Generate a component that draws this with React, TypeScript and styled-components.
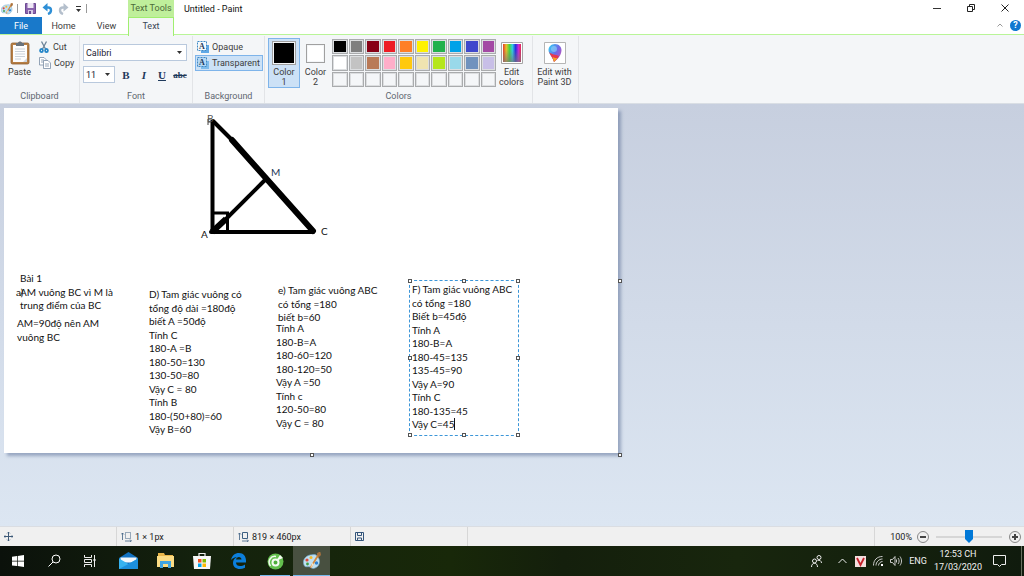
import React from 'react';
import styled, { createGlobalStyle, css } from 'styled-components';

const GlobalStyle = createGlobalStyle`
  * { box-sizing: border-box; }
  body { margin: 0; background: #fff; }
  button, select, input { font: inherit; color: inherit; margin: 0; }
  button { padding: 0; border: 0; background: none; }
  svg { display: block; flex: none; }
`;

const AppWindow = styled.div`
  display: flex;
  flex-direction: column;
  min-height: 100vh;
  font-family: Roboto, 'Noto Sans', sans-serif;
  font-size: 9px;
  line-height: 12px;
  color: #3c3c3c;
`;

/* ---------- title bar ---------- */
const Header = styled.header`
  display: flex;
  height: 36px;
  background: linear-gradient(#fff 34px, #b9f598 34px, #b9f598 35px, #f4f6f8 35px);
`;
const HeaderLeft = styled.div`
  width: 128px;
`;
const QuickAccess = styled.div`
  display: flex;
  align-items: center;
  height: 17px;
`;
const QuickButton = styled.button<{ $w: number }>`
  width: ${(p) => p.$w}px;
  display: flex;
  justify-content: center;
`;
const Bar = styled.span`
  width: 1px;
  height: 9px;
  background: #999;
`;
const Tabs = styled.nav`
  display: flex;
  height: 17px;
`;
const Tab = styled.button<{ $file?: boolean }>`
  width: 43px;
  ${(p) => p.$file && css`
    width: 42px;
    color: #fff;
    background: #1979ca;
  `}
`;
const ContextTab = styled.div`
  width: 46px;
  text-align: center;
`;
const ContextTitle = styled.div`
  height: 17px;
  line-height: 16px;
  color: #4c6a3a;
  background: #bfef9b;
  white-space: nowrap;
`;
const ActiveTab = styled.button`
  display: block;
  width: 100%;
  height: 19px;
  padding-bottom: 2px;
  color: #3b4658;
  border: 1px solid #a0ef70;
  border-width: 1px 1px 0;
  background: #f5f6f7;
`;
const Title = styled.h1`
  margin: 3px 0 0 10px;
  font-size: 9px;
  line-height: 12px;
  font-weight: 400;
  color: #111;
`;
const Controls = styled.div`
  margin-left: auto;
`;
const WindowButtons = styled.div`
  display: flex;
  height: 16px;
  padding-right: 2px;
`;
const WindowButton = styled.button`
  width: 34px;
  display: grid;
  place-items: center;
`;
const HelpRow = styled.div`
  display: flex;
  justify-content: flex-end;
  align-items: center;
  gap: 7px;
  height: 18px;
  padding-right: 3px;
`;
const HelpButton = styled.button`
  width: 11px;
  height: 11px;
  border-radius: 50%;
  line-height: 11px;
  font-weight: 700;
  color: #fff;
  background: #0f78d0;
`;

/* ---------- ribbon ---------- */
const Ribbon = styled.section`
  display: flex;
  height: 68px;
  background: #f4f6f8;
  border-bottom: 1px solid #d9dee4;
`;
const Group = styled.div<{ $w: number }>`
  display: flex;
  flex-direction: column;
  justify-content: space-between;
  width: ${(p) => p.$w}px;
  height: 67px;
  border-right: 1px solid #e2e4e7;
`;
const GroupBody = styled.div<{ $pad?: number }>`
  display: flex;
  padding: 2px 0 0 ${(p) => p.$pad ?? 0}px;
`;
const GroupLabel = styled.div`
  height: 13px;
  text-align: center;
  color: #5e6670;
`;
const LargeButton = styled.button<{ $w: number; $selected?: boolean }>`
  display: flex;
  flex-direction: column;
  align-items: center;
  width: ${(p) => p.$w}px;
  height: 50px;
  padding-top: 1px;
  line-height: 10px;
  border: 1px solid transparent;
  ${(p) => p.$selected && css`
    border-color: #7eb4ea;
    background: #cce1f6;
  `}
`;
const LargeIcon = styled.span`
  display: grid;
  place-items: center;
  height: 26px;
`;
const LargeText = styled.span`
  padding-top: 1px;
  white-space: nowrap;
`;
const Column = styled.div<{ $gap: number; $top: number }>`
  display: flex;
  flex-direction: column;
  align-items: flex-start;
  gap: ${(p) => p.$gap}px;
  padding-top: ${(p) => p.$top}px;
`;
const SmallButton = styled.button<{ $selected?: boolean }>`
  display: flex;
  align-items: center;
  gap: 3px;
  height: 16px;
  padding: 0 2px 0 1px;
  white-space: nowrap;
  border: 1px solid transparent;
  ${(p) => p.$selected && css`
    border-color: #7eb4ea;
    background: #cce1f6;
  `}
`;
const PickerBox = styled.label<{ $w: number }>`
  display: grid;
  grid-template-columns: 1fr 9px;
  align-items: center;
  width: ${(p) => p.$w}px;
  height: 17px;
  color: #223;
  background: #fff;
  border: 1px solid #b9c9dd;
`;
const Picker = styled.select`
  appearance: none;
  width: 100%;
  padding: 0 2px;
  border: 0;
  background: none;
`;
const FormatRow = styled.div`
  display: flex;
  align-items: center;
  gap: 4px;
`;
const FormatButton = styled.button<{ $kind: 'b' | 'i' | 'u' | 's' }>`
  width: 14px;
  height: 16px;
  font-family: 'Liberation Serif', serif;
  font-weight: 700;
  font-size: 11px;
  color: #1e395b;
  ${(p) => p.$kind === 'i' && css`font-style: italic;`}
  ${(p) => p.$kind === 'u' && css`text-decoration: underline;`}
  ${(p) => p.$kind === 's' && css`
    font-size: 9px;
    text-decoration: line-through;
  `}
`;
const ColorChip = styled.span<{ $size: number; $color: string }>`
  width: ${(p) => p.$size}px;
  height: ${(p) => p.$size}px;
  border: 1px solid #a0a0a0;
  box-shadow: inset 0 0 0 1px #f4f6f8;
  background: ${(p) => p.$color};
`;
const Palette = styled.div`
  display: grid;
  grid-template-columns: repeat(10, 1fr);
  grid-template-rows: repeat(3, 1fr);
  gap: 1px;
  width: 164px;
  height: 48px;
  margin: 1px 1px 0;
`;
const Swatch = styled.button<{ $color: string }>`
  border: 1px solid #a9abad;
  box-shadow: inset 0 0 0 1px #dcdee0;
  background: ${(p) => p.$color};
`;

/* ---------- work area ---------- */
const WorkArea = styled.main`
  flex: 1;
  padding: 4px;
  background: linear-gradient(#c7cfdf, #dce6f2);
`;
const Sheet = styled.div`
  position: relative;
  width: 614px;
  height: 345px;
  background: #fff;
  box-shadow: 3px 3px 3px rgba(90, 110, 150, 0.5);
  font-family: Lato, 'Noto Sans', sans-serif;
  font-size: 10px;
  line-height: 13px;
  color: #111;
`;
const Drawing = styled.svg`
  position: absolute;
  inset: 0;
`;
const Note = styled.div<{ $x: number; $y: number; $h?: number; $color?: string }>`
  position: absolute;
  left: ${(p) => p.$x}px;
  top: ${(p) => p.$y}px;
  height: ${(p) => p.$h ?? 13}px;
  display: flex;
  flex-direction: column;
  justify-content: space-between;
  white-space: nowrap;
  color: ${(p) => p.$color ?? 'inherit'};
`;
const Selection = styled.div`
  position: absolute;
  left: 405px;
  top: 172px;
  width: 110px;
  height: 156px;
  border: 1px dashed #3c96d8;
`;
const Handle = styled.span<{ $x: string; $y: string }>`
  position: absolute;
  left: ${(p) => p.$x};
  top: ${(p) => p.$y};
  width: 4px;
  height: 4px;
  margin: -2px;
  border: 1px solid #555;
  background: #fff;
`;
const Caret = styled.span`
  display: inline-block;
  width: 1px;
  height: 12px;
  vertical-align: -2px;
  background: #111;
`;

/* ---------- status bar ---------- */
const StatusBar = styled.footer`
  display: flex;
  height: 20px;
  color: #222;
  background: #f0f0f0;
  border-top: 1px solid #dadde2;
`;
const StatusCell = styled.div`
  display: flex;
  align-items: center;
  gap: 3px;
  width: 117px;
  padding-left: 4px;
  border-right: 1px solid #d7d7d7;
`;
const Zoom = styled.div`
  display: flex;
  align-items: center;
  gap: 5px;
  margin-left: auto;
  padding: 0 3px 0 15px;
  border-left: 1px solid #d7d7d7;
`;
const RoundButton = styled.button`
  width: 12px;
  height: 12px;
  display: grid;
  place-items: center;
  border: 1px solid #888;
  border-radius: 50%;
`;
const Slider = styled.input`
  appearance: none;
  width: 66px;
  height: 14px;
  margin: 0 2px;
  background: linear-gradient(#d6d6d6, #d6d6d6) center / 100% 2px no-repeat;
  &::-webkit-slider-thumb {
    appearance: none;
    width: 8px;
    height: 13px;
    background: #0078d7;
    clip-path: polygon(0 0, 100% 0, 100% 70%, 50% 100%, 0 70%);
  }
`;

/* ---------- taskbar ---------- */
const Taskbar = styled.nav`
  display: flex;
  height: 30px;
  color: #f2f2f2;
  background: linear-gradient(90deg, #0b110b, #14220d 20%, #182809 44%, #141f0c 55%, #18260d 72%, #101b0d);
`;
const TaskButton = styled.button<{ $running?: boolean; $active?: boolean }>`
  display: grid;
  place-items: center;
  width: 36px;
  height: 30px;
  border-bottom: 1px solid transparent;
  ${(p) => p.$running && css`
    border-bottom: 0;
    background: linear-gradient(#76b9ed, #76b9ed) bottom / 30px 1px no-repeat;
  `}
  ${(p) => p.$active && css`
    background: #485040;
    border-bottom-color: #76b9ed;
  `}
`;
const Pinned = styled.div`
  display: flex;
  width: 220px;
  margin-left: 2px;
  & > button { flex: 1; }
`;
const Tray = styled.div`
  display: flex;
  align-items: center;
  margin-left: auto;
`;
const TrayButton = styled.button<{ $w: number }>`
  display: grid;
  place-items: center;
  width: ${(p) => p.$w}px;
  height: 30px;
`;
const Clock = styled(TrayButton)`
  align-content: center;
  line-height: 13px;
  white-space: nowrap;
`;
const ShowDesktop = styled.button`
  width: 3px;
  height: 30px;
  border-left: 1px solid #687060;
`;

/* ---------- icons ---------- */
const PaintIcon = ({ size }: { size: number }) => (
  <svg width={size} height={size} viewBox="0 0 18 18">
    <path d="M7 3C2 4-1 9 1 13c1 3 4 1 6 2 2 2 5 2 8-1 3-4 1-9-2-11-2-1-4 0-6 0z" fill="#bfe0f2" stroke="#6fa6c9" strokeWidth=".7" />
    <circle cx="4" cy="8" r="1.6" fill="#e04a3c" />
    <circle cx="8" cy="5.500" r="1.500" fill="#f3ba2c" />
    <circle cx="4.500" cy="12" r="1.400" fill="#3f9b48" />
    <circle cx="13.500" cy="11" r="1.700" fill="#2d7fd0" />
    <path d="M16.500 1 8 15" stroke="#d38a3d" strokeWidth="1.800" strokeLinecap="round" />
    <path d="m14 1 3-1 1 3-3 3z" fill="#a9723f" />
    <path d="m9 11 2 1-3 4z" fill="#f0e6d0" />
  </svg>
);
const Save = () => (
  <svg width="11" height="11" viewBox="0 0 11 11">
    <path d="M.5.5h10v10h-10z" fill="#8a63ad" stroke="#6c4a93" />
    <path d="M2.500 0h6v5h-6z" fill="#eee8f5" /><path d="M3 7h5v4H3z" fill="#d6cbe4" /><path d="M4 8h2v3H4z" fill="#6c4a93" />
  </svg>
);
const Undo = ({ flip }: { flip?: boolean }) => (
  <svg width="11" height="12" viewBox="0 0 11 12">
    <g transform={flip ? 'translate(11 0) scale(-1 1)' : undefined}>
      <path d="M3 4.500h3c4 0 4 5 0 6.500" fill="none" stroke={flip ? '#b4bfcc' : '#2e8fd6'} strokeWidth="2.400" />
      <path d="M5.500 0v8.500L.5 4.500z" fill={flip ? '#b4bfcc' : '#2e8fd6'} />
    </g>
  </svg>
);
const Caretdown = ({ c = '#333' }: { c?: string }) => (
  <svg width="5" height="3" viewBox="0 0 5 3"><path d="M0 0h5L2.500 3z" fill={c} /></svg>
);
const Clipboard = () => (
  <svg width="20" height="24" viewBox="0 0 20 24">
    <rect x="1" y="2" width="18" height="21" rx="1.500" fill="#b77f45" stroke="#8f5f30" strokeWidth=".8" />
    <path d="M3 4h14v17H3z" fill="#fdfdfd" />
    <path d="M5 8h10M5 10.500h10M5 13h10M5 15.500h10M5 18h6" stroke="#c4ccd5" strokeWidth=".9" />
    <path d="M6 2h2c0-2 4-2 4 0h2v3H6z" fill="#69737d" /><path d="m17 17v4h-4z" fill="#cfd7df" />
  </svg>
);
const Scissors = () => (
  <svg width="11" height="12" viewBox="0 0 11 12" fill="none">
    <path d="m2.500 .5 4 7.500M7.500 .5 3.500 8" stroke="#6d8599" strokeWidth="1.300" />
    <ellipse cx="2.500" cy="9.500" rx="1.400" ry="1.600" stroke="#2184c7" strokeWidth="1.800" /><ellipse cx="7.500" cy="9.500" rx="1.400" ry="1.600" stroke="#2184c7" strokeWidth="1.800" />
  </svg>
);
const CopyIcon = () => (
  <svg width="12" height="12" viewBox="0 0 12 12" stroke="#7a8ea5" strokeWidth=".8">
    <path d="M.5.5h4.500l2 2V8H.5z" fill="#fff" /><path d="M2 3h3M2 5h3" />
    <path d="M4.500 3.500h4.500l2.500 2.500v5.500h-7z" fill="#fff" /><path d="M6 7h4M6 9h4" />
  </svg>
);
const LetterBox = ({ filled }: { filled?: boolean }) => (
  <svg width="12" height="12" viewBox="0 0 12 12">
    <path d="M4 4h8v8H4z" fill={filled ? '#7ebcec' : '#5fa8e6'} />
    <path d="M.5.5h9v9h-9z" fill={filled ? '#b4d7f4' : '#f4f9fd'} stroke="#3f89c4" strokeDasharray="2 1" />
    <text x="2" y="8" fontSize="8" fontFamily="Liberation Serif, serif" fontWeight="700" fill="#1e395b">A</text>
  </svg>
);
const Rainbow = () => (
  <svg width="22" height="22" viewBox="0 0 22 22">
    <defs>
      <linearGradient id="hue"><stop offset="0" stopColor="#e63a2e" /><stop offset=".18" stopColor="#e8c02a" /><stop offset=".36" stopColor="#46d640" /><stop offset=".52" stopColor="#32cfe0" /><stop offset=".7" stopColor="#2430e0" /><stop offset=".86" stopColor="#c728d8" /><stop offset="1" stopColor="#e62a4a" /></linearGradient>
      <linearGradient id="fade" x2="0" y2="1"><stop offset=".3" stopColor="#777" stopOpacity="0" /><stop offset="1" stopColor="#777" stopOpacity=".7" /></linearGradient>
    </defs>
    <path d="M.5.5h21v21H.5z" fill="#fff" stroke="#a5a5a5" /><path d="M2 2h18v18H2z" fill="url(#hue)" /><path d="M2 2h18v18H2z" fill="url(#fade)" />
  </svg>
);
const Paint3D = () => (
  <svg width="22" height="22" viewBox="0 0 22 22">
    <defs><linearGradient id="drop" x1="0" y1=".2" x2="1" y2=".9"><stop offset="0" stopColor="#39c5f3" /><stop offset=".5" stopColor="#6a6be8" /><stop offset="1" stopColor="#d54bb0" /></linearGradient></defs>
    <path d="M.5.5h21v21H.5z" fill="#fff" stroke="#b5b5b5" />
    <path d="M11 2c-4 0-6.500 3-6.500 6 0 4 4 6 5.500 12 4-3 7.500-7 7.500-12 0-3-2.500-6-6.500-6z" fill="url(#drop)" />
    <path d="M5 10c3 3 6 2 10 4-1 2-3 4-5 6-1-4-4-7-5-10z" fill="#e8394d" /><path d="M8.500 15c2 1 3 1 5 1l-3.500 4z" fill="#f5a623" />
    <circle cx="10" cy="7" r="3" fill="#8fd4fa" opacity=".6" />
  </svg>
);
const SizeIcon = ({ dashed }: { dashed?: boolean }) => (
  <svg width="11" height="10" viewBox="0 0 11 10" fill="none" stroke="#3e6083">
    <path d="M1.500 1v7M0 2.500 1.500 1 3 2.500" strokeWidth=".8" /><path d="M4.500.5h5v6h-5z" strokeDasharray={dashed ? '1 1' : undefined} />
    <path d="M4 9h6M9 7.500 10.500 9 9 10" strokeWidth=".8" />
  </svg>
);

/* ---------- data ---------- */
const palette = [
  '#000', '#7f7f7f', '#880015', '#ed1c24', '#ff7f27', '#fff200', '#22b14c', '#00a2e8', '#3f48cc', '#a349a4',
  '#fff', '#c3c3c3', '#b97a57', '#ffaec9', '#ffc90e', '#efe4b0', '#b5e61d', '#99d9ea', '#7092be', '#c8bfe7',
  ...Array(10).fill('#f4f6f8'),
];
type Block = { x: number; y: number; h?: number; color?: string; lines: string[] };
const notes: Block[] = [
  { x: 203, y: 4, color: '#555', lines: ['B'] },
  { x: 267, y: 58, color: '#1e3556', lines: ['M'] },
  { x: 197, y: 120, lines: ['A'] },
  { x: 317, y: 117, lines: ['C'] },
  { x: 16, y: 164, lines: ['Bài 1'] },
  { x: 12, y: 178, lines: ['a)'] },
  { x: 16, y: 178, h: 26, lines: ['AM vuông BC vì M là', 'trung điểm của BC'] },
  { x: 13, y: 209, h: 27, lines: ['AM=90độ nên AM', 'vuông BC'] },
  { x: 145, y: 180, h: 148, lines: ['D) Tam giác vuông có', 'tổng độ dài =180độ', 'biết A =50độ', 'Tính C', '180-A =B', '180-50=130', '130-50=80', 'Vậy C = 80', 'Tính B', '180-(50+80)=60', 'Vậy B=60'] },
  { x: 274, y: 176, h: 40, lines: ['e) Tam giác vuông ABC', 'có tổng =180', 'biết b=60'] },
  { x: 272, y: 214, h: 108, lines: ['Tính A', '180-B=A', '180-60=120', '180-120=50', 'Vậy A =50', 'Tính c', '120-50=80', 'Vậy C = 80'] },
];
const activeNote = ['F) Tam giác vuông ABC', 'có tổng =180', 'Biết b=45độ', 'Tính A', '180-B=A', '180-45=135', '135-45=90', 'Vậy A=90', 'Tính C', '180-135=45'];

export default function App() {
  return (
    <AppWindow>
      <GlobalStyle />
      <Header>
        <HeaderLeft>
          <QuickAccess>
            <QuickButton $w={13} aria-label="Paint menu"><PaintIcon size={12} /></QuickButton>
            <QuickButton $w={8} as="span"><Bar /></QuickButton>
            <QuickButton $w={19} aria-label="Save"><Save /></QuickButton>
            <QuickButton $w={15} aria-label="Undo"><Undo /></QuickButton>
            <QuickButton $w={16} aria-label="Redo"><Undo flip /></QuickButton>
            <QuickButton $w={15} aria-label="Customize">
              <svg width="5" height="6" viewBox="0 0 5 6"><path d="M0 0h5v1H0zM0 3h5L2.500 6z" fill="#333" /></svg>
            </QuickButton>
            <Bar />
          </QuickAccess>
          <Tabs>
            <Tab $file>File</Tab>
            <Tab>Home</Tab>
            <Tab>View</Tab>
          </Tabs>
        </HeaderLeft>
        <ContextTab>
          <ContextTitle>Text Tools</ContextTitle>
          <ActiveTab>Text</ActiveTab>
        </ContextTab>
        <Title>Untitled - Paint</Title>
        <Controls>
          <WindowButtons>
            <WindowButton aria-label="Minimize"><svg width="8" height="8"><path d="M0 4.500h8" stroke="#333" /></svg></WindowButton>
            <WindowButton aria-label="Restore"><svg width="8" height="8" fill="none" stroke="#222"><path d="M.5 2.500h5v5h-5zM2.500 2V.5h5v5H6" /></svg></WindowButton>
            <WindowButton aria-label="Close"><svg width="8" height="8" stroke="#222"><path d="m.5.5 7 7M7.500.5l-7 7" /></svg></WindowButton>
          </WindowButtons>
          <HelpRow>
            <button aria-label="Collapse ribbon"><svg width="6" height="4" fill="none" stroke="#999"><path d="M.5 3.500 3 1l2.500 2.500" /></svg></button>
            <HelpButton aria-label="Help">?</HelpButton>
          </HelpRow>
        </Controls>
      </Header>

      <Ribbon>
        <Group $w={80}>
          <GroupBody $pad={2}>
            <LargeButton $w={35}><LargeIcon><Clipboard /></LargeIcon><LargeText>Paste</LargeText></LargeButton>
            <Column $gap={0} $top={1}>
              <SmallButton><Scissors />Cut</SmallButton>
              <SmallButton><CopyIcon />Copy</SmallButton>
            </Column>
          </GroupBody>
          <GroupLabel>Clipboard</GroupLabel>
        </Group>
        <Group $w={113}>
          <GroupBody $pad={3}>
            <Column $gap={5} $top={6}>
              <PickerBox $w={104}>
                <Picker aria-label="Font family"><option>Calibri</option></Picker><Caretdown />
              </PickerBox>
              <FormatRow>
                <PickerBox $w={32}>
                  <Picker aria-label="Font size"><option>11</option></Picker><Caretdown />
                </PickerBox>
                <FormatButton $kind="b">B</FormatButton>
                <FormatButton $kind="i">I</FormatButton>
                <FormatButton $kind="u">U</FormatButton>
                <FormatButton $kind="s">abc</FormatButton>
              </FormatRow>
            </Column>
          </GroupBody>
          <GroupLabel>Font</GroupLabel>
        </Group>
        <Group $w={72}>
          <GroupBody $pad={2}>
            <Column $gap={0} $top={1}>
              <SmallButton><LetterBox />Opaque</SmallButton>
              <SmallButton $selected><LetterBox filled />Transparent</SmallButton>
            </Column>
          </GroupBody>
          <GroupLabel>Background</GroupLabel>
        </Group>
        <Group $w={268}>
          <GroupBody $pad={3}>
            <LargeButton $w={32} $selected><LargeIcon><ColorChip $size={24} $color="#000" /></LargeIcon><LargeText>Color<br />1</LargeText></LargeButton>
            <LargeButton $w={31}><LargeIcon><ColorChip $size={19} $color="#fff" /></LargeIcon><LargeText>Color<br />2</LargeText></LargeButton>
            <Palette>
              {palette.map((c, i) => <Swatch key={i} $color={c} aria-label={`Color ${i + 1}`} />)}
            </Palette>
            <LargeButton $w={29}><LargeIcon><Rainbow /></LargeIcon><LargeText>Edit<br />colors</LargeText></LargeButton>
          </GroupBody>
          <GroupLabel>Colors</GroupLabel>
        </Group>
        <Group $w={46}>
          <GroupBody>
            <LargeButton $w={43}><LargeIcon><Paint3D /></LargeIcon><LargeText>Edit with<br />Paint 3D</LargeText></LargeButton>
          </GroupBody>
        </Group>
      </Ribbon>

      <WorkArea>
        <Sheet>
          <Drawing width="614" height="345" viewBox="0 0 614 345" fill="none" stroke="#000">
            <path d="M208.500 12v112" strokeWidth="4" />
            <path d="M207 124h102" strokeWidth="4" strokeLinecap="round" />
            <path d="m209 13 20 20" strokeWidth="4" strokeLinecap="round" />
            <path d="m228 32 81 91" strokeWidth="6" strokeLinecap="round" />
            <path d="m210 123 51-51" strokeWidth="4" strokeLinecap="round" />
            <path d="M210 105h13.500v18" strokeWidth="3" />
            <path d="m208 124 14-13" strokeWidth="6" />
            <path d="M204 17v-6h3M204 14h3" stroke="#444" />
          </Drawing>
          {notes.map((n, i) => (
            <Note key={i} $x={n.x} $y={n.y} $h={n.h} $color={n.color}>
              {n.lines.map((l) => <span key={l}>{l}</span>)}
            </Note>
          ))}
          <Selection>
            {['0%', '50%', '100%'].flatMap((x) => ['0%', '50%', '100%'].map((y) => (
              x === '50%' && y === '50%' ? null : <Handle key={x + y} $x={x} $y={y} />
            )))}
          </Selection>
          <Note $x={408} $y={175} $h={148}>
            {activeNote.map((l) => <span key={l}>{l}</span>)}
            <span>Vậy C=45<Caret /></span>
          </Note>
          <Handle $x="308px" $y="347px" />
          <Handle $x="616px" $y="347px" />
          <Handle $x="616px" $y="173px" />
        </Sheet>
      </WorkArea>

      <StatusBar>
        <StatusCell>
          <svg width="9" height="9" viewBox="0 0 9 9" fill="none" stroke="#3e5a78"><path d="M4.500 0v9M0 4.500h9" /><path d="M3 1.500 4.500 0 6 1.500M3 7.500 4.500 9 6 7.500M1.500 3 0 4.500 1.500 6M7.500 3 9 4.500 7.500 6" strokeWidth=".6" /></svg>
        </StatusCell>
        <StatusCell><SizeIcon dashed />1 × 1px</StatusCell>
        <StatusCell><SizeIcon />819 × 460px</StatusCell>
        <StatusCell>
          <svg width="9" height="9" viewBox="0 0 9 9" fill="none" stroke="#34557b"><path d="M.5.5h8v8h-8zM2.500.5v3h4v-3M2.500 8.500V6h4v2.500" /></svg>
        </StatusCell>
        <Zoom>
          <span>100%</span>
          <RoundButton aria-label="Zoom out"><svg width="6" height="6"><path d="M0 3h6" stroke="#444" strokeWidth="2" /></svg></RoundButton>
          <Slider type="range" aria-label="Zoom" defaultValue={50} />
          <RoundButton aria-label="Zoom in"><svg width="6" height="6"><path d="M0 3h6M3 0v6" stroke="#444" strokeWidth="2" /></svg></RoundButton>
        </Zoom>
      </StatusBar>

      <Taskbar>
        <TaskButton aria-label="Start">
          <svg width="12" height="12" viewBox="0 0 12 12" fill="#fff"><path d="m0 1.700 5-.7v4.700H0zM5.700.9 12 0v5.700H5.700zM0 6.400h5v4.700l-5-.7zM5.700 6.400H12V12l-6.300-.9z" /></svg>
        </TaskButton>
        <TaskButton aria-label="Search">
          <svg width="13" height="13" viewBox="0 0 13 13" fill="none" stroke="#fff"><circle cx="8" cy="5" r="4" /><path d="m5 8-4.500 4.500" /></svg>
        </TaskButton>
        <TaskButton aria-label="Task view">
          <svg width="13" height="12" viewBox="0 0 13 12" fill="none" stroke="#eee"><path d="M.5 0v2.500h7V0M.5 4.500h7v3h-7zM.5 12V9.500h7V12M10.500 0v12" /><path d="M9.500 4h2v2h-2z" fill="#eee" stroke="none" /></svg>
        </TaskButton>
        <Pinned>
          <TaskButton aria-label="Mail">
            <svg width="19" height="17" viewBox="0 0 19 17"><path d="m0 6 9.500-6L19 6v11H0z" fill="#1272c2" /><path d="M1.500 5.500h16v5h-16z" fill="#f3f7fb" /><path d="M0 6.500 9.500 12 19 6.500V17H0z" fill="#36b2ef" /><path d="m0 17 9.500-5L19 6.500V17z" fill="#1c8fdc" /></svg>
          </TaskButton>
          <TaskButton aria-label="File Explorer">
            <svg width="17" height="15" viewBox="0 0 17 15"><path d="M1 0h6l1 2h8v12H1z" fill="#e9b64a" /><path d="M0 3h17v11H0z" fill="#fbdc84" /><path d="M3 8h11v7h-3v-4H6v4H3z" fill="#3fa4e2" /></svg>
          </TaskButton>
          <TaskButton aria-label="Store">
            <svg width="18" height="18" viewBox="0 0 18 18"><path d="M6 5V1.500h6V5" fill="none" stroke="#eee" strokeWidth="1.200" /><path d="M0 4h18l-1 13H1z" fill="#f7f7f7" /><path d="M5 7h3.500v3.500H5z" fill="#f25022" /><path d="M9.500 7H13v3.500H9.500z" fill="#7fba00" /><path d="M5 11.500h3.500V15H5z" fill="#00a4ef" /><path d="M9.500 11.500H13V15H9.500z" fill="#ffb900" /></svg>
          </TaskButton>
          <TaskButton aria-label="Edge">
            <svg width="15" height="16" viewBox="0 0 15 16"><path d="M0 7C1 2.500 4 0 8 0c4.500 0 7 3.500 7 7.500V9.500H5c0 4 5 4.500 9 2v3.300C8 17.500 2 15.500 2 10c0-3 1.500-4.800 4-6C3.500 4.300 1.500 5.300 0 7zm5-.5h5.500C10.500 3 5.500 3 5 6.500z" fill="#0c7fdc" /></svg>
          </TaskButton>
          <TaskButton $running aria-label="Browser">
            <svg width="17" height="17" viewBox="0 0 17 17"><circle cx="8.500" cy="8.500" r="8" fill="#63bf4d" /><path d="M3.500 13C0 8 4 2.500 9 3.500" stroke="#f2faee" strokeWidth="1.500" fill="none" /><circle cx="8.500" cy="9.500" r="3" fill="#4fae3c" stroke="#f5fbf2" strokeWidth="2" /><path d="m9 8 4-6 3 3z" fill="#f5fbf2" /></svg>
          </TaskButton>
          <TaskButton $active aria-label="Paint"><PaintIcon size={18} /></TaskButton>
        </Pinned>
        <Tray>
          <TrayButton $w={34} aria-label="People">
            <svg width="11" height="12" viewBox="0 0 11 12" fill="none" stroke="#eee"><circle cx="8" cy="2.500" r="2" /><path d="M6.500 5.500c2-1 4 .5 4 2.500" /><circle cx="3.500" cy="6" r="2" /><path d="M.5 12c0-5 6-5 6 0" /></svg>
          </TrayButton>
          <TrayButton $w={18} aria-label="Hidden icons"><svg width="9" height="6" fill="none" stroke="#eee"><path d="m.5 5 4-4 4 4" /></svg></TrayButton>
          <TrayButton $w={18} aria-label="Unikey">
            <svg width="11" height="11" viewBox="0 0 11 11"><path d="M0 0h11v11H0z" fill="#f5dede" /><path d="m2 2 3.500 7L9 2" fill="none" stroke="#c8202b" strokeWidth="1.800" /></svg>
          </TrayButton>
          <TrayButton $w={18} aria-label="Network">
            <svg width="10" height="10" viewBox="0 0 10 10" fill="none" stroke="#ccc"><path d="M.5 9.500C.5 4 4 .5 9.500.5M3 9.500C3 6 6 3 9.500 3M5.500 9.500c0-2 2-4 4-4" /><path d="M8 8h2v2H8z" fill="#fff" stroke="none" /></svg>
          </TrayButton>
          <TrayButton $w={18} aria-label="Volume">
            <svg width="12" height="10" viewBox="0 0 12 10" fill="none" stroke="#ddd"><path d="M.5 3.500h2l2.500-3v9l-2.500-3h-2zM6.500 3.500v3M8 2c1.500 2 1.500 4 0 6M10 .5c2 3 2 6 0 9" strokeWidth=".9" /></svg>
          </TrayButton>
          <TrayButton $w={26}>ENG</TrayButton>
          <Clock $w={54}><span>12:53 CH</span><span>17/03/2020</span></Clock>
          <TrayButton $w={28} aria-label="Notifications">
            <svg width="13" height="12" viewBox="0 0 13 12" fill="none" stroke="#eee"><path d="M.5.5h12v9h-4l-2 2-2-2h-4z" /></svg>
          </TrayButton>
          <TrayButton $w={8} as="span" />
          <ShowDesktop aria-label="Show desktop" />
        </Tray>
      </Taskbar>
    </AppWindow>
  );
}
